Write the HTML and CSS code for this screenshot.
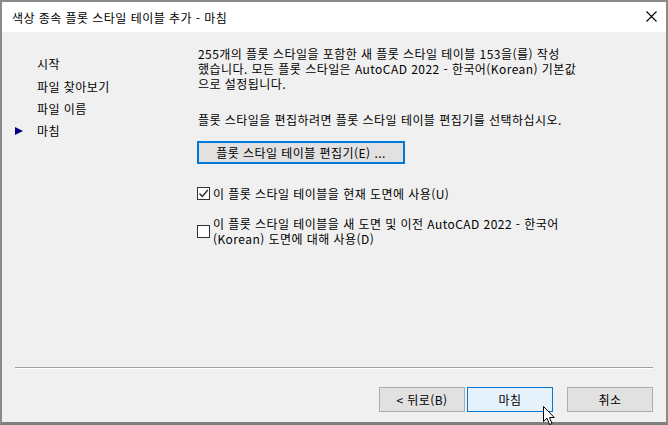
FILE: index.html
```html
<!DOCTYPE html>
<html lang="ko">
<head>
<meta charset="utf-8">
<title>색상 종속 플롯 스타일 테이블 추가 - 마침</title>
<link rel="stylesheet" href="styles.css">
</head>
<body>
<div class="window">
  <div class="titlebar">
    <span class="title">색상 종속 플롯 스타일 테이블 추가 - 마침</span>
    <span class="close">
      <svg width="11" height="11" viewBox="0 0 11 11"><path d="M0.5 0.5 L10.5 10.5 M10.5 0.5 L0.5 10.5" stroke="#000" stroke-width="1.1" fill="none"/></svg>
    </span>
  </div>
  <div class="body">
    <div class="content">
      <ul class="nav">
        <li class="nav-item"><span class="marker"></span>시작</li>
        <li class="nav-item"><span class="marker"></span>파일 찾아보기</li>
        <li class="nav-item"><span class="marker"></span>파일 이름</li>
        <li class="nav-item current"><span class="marker"><svg width="8" height="8" viewBox="0 0 8 8"><path d="M0 0 L8 4 L0 8 Z" fill="#000080"/></svg></span>마침</li>
      </ul>
      <div class="main">
        <p class="para">255개의 플롯 스타일을 포함한 새 플롯 스타일 테이블 153을(를) 작성<br>했습니다. 모든 플롯 스타일은 AutoCAD 2022 - 한국어(Korean) 기본값<br>으로 설정됩니다.</p>
        <p class="para para2">플롯 스타일을 편집하려면 플롯 스타일 테이블 편집기를 선택하십시오.</p>
        <button class="btn editor">플롯 스타일 테이블 편집기(E) ...</button>
        <label class="check check1">
          <span class="box"><svg width="11" height="11" viewBox="0 0 11 11"><path d="M1.5 5.5 L4.3 8.5 L9.8 2" stroke="#222" stroke-width="1.3" fill="none"/></svg></span>
          <span class="check-text">이 플롯 스타일 테이블을 현재 도면에 사용(U)</span>
        </label>
        <label class="check check2">
          <span class="box"></span>
          <span class="check-text">이 플롯 스타일 테이블을 새 도면 및 이전 AutoCAD 2022 - 한국어<br>(Korean) 도면에 대해 사용(D)</span>
        </label>
      </div>
    </div>
    <div class="footer">
      <div class="separator"></div>
      <div class="buttons">
        <button class="btn fbtn back">&lt; 뒤로(B)</button>
        <button class="btn fbtn default">마침</button>
        <button class="btn fbtn cancel">취소</button>
      </div>
    </div>
  </div>
  <svg class="cursor" width="13" height="20" viewBox="0 0 13 20"><path d="M0.5 0.5 L0.5 15.5 L4 12.2 L6.6 18.5 L9 17.5 L6.5 11.5 L11.3 11.5 Z" fill="#fff" stroke="#000" stroke-width="1"/></svg>
</div>
</body>
</html>
```
FILE: styles.css
```css
* { box-sizing: border-box; }
html, body {
  margin: 0;
  padding: 0;
  width: 668px;
  height: 425px;
  overflow: hidden;
  background: #8a8a8a;
}
body {
  font-family: "Noto Sans CJK KR", "Noto Sans", sans-serif;
  font-size: 12px;
  letter-spacing: 0.45px;
  color: #000;
}
.window {
  position: relative;
  width: 668px;
  height: 425px;
  border-top: 2px solid #8a8a8a;
  border-left: 2px solid #8a8a8a;
  border-right: 2px solid #8a8a8a;
  border-bottom: 3px solid #7e7e7e;
  display: flex;
  flex-direction: column;
  background: #f0f0f0;
}
.titlebar {
  height: 30px;
  background: #fff;
  display: flex;
  align-items: center;
  justify-content: space-between;
  padding: 0 9px 0 10px;
  flex: none;
}
.title {
  line-height: 16px;
  padding-top: 1px;
}
.close {
  display: flex;
  width: 11px;
  height: 11px;
  margin-bottom: 2px;
}
.body {
  flex: 1;
  display: flex;
  flex-direction: column;
  background: #f0f0f0;
}
.content {
  flex: 1;
  display: flex;
}
.nav {
  list-style: none;
  margin: 0;
  padding: 21px 0 0 13px;
  width: 196px;
  flex: none;
}
.nav-item {
  display: flex;
  align-items: center;
  height: 22.4px;
  line-height: 22px;
}
.marker {
  width: 22px;
  display: flex;
  align-items: center;
  flex: none;
}
.main {
  padding-top: 14px;
  display: flex;
  flex-direction: column;
  align-items: flex-start;
}
.para {
  margin: 0;
  line-height: 15px;
  white-space: nowrap;
}
.para2 {
  margin-top: 21px;
}
.btn {
  font-family: inherit;
  font-size: 12px;
  letter-spacing: 0.45px;
  color: #000;
  background: #e1e1e1;
  border: 1px solid #adadad;
  padding: 0;
  margin: 0;
  line-height: 16px;
}
.editor {
  margin-top: 14px;
  width: 208px;
  height: 23px;
  border: 2px solid #0078d7;
  margin-left: -1px;
}
.check {
  display: flex;
  align-items: center;
  margin-left: -1px;
}
.check1 {
  margin-top: 22px;
}
.check2 {
  margin-top: 15px;
}
.box {
  width: 13px;
  height: 13px;
  border: 1px solid #333;
  background: #fff;
  flex: none;
  display: flex;
  align-items: center;
  justify-content: center;
  margin-right: 3px;
}
.check-text {
  line-height: 15px;
  white-space: nowrap;
}
.footer {
  flex: none;
  padding: 0 13px 10px 13px;
}
.separator {
  height: 2px;
  border-top: 1px solid #a0a0a0;
  border-bottom: 1px solid #fff;
  margin-bottom: 18px;
}
.buttons {
  display: flex;
  justify-content: flex-end;
}
.fbtn {
  width: 86px;
  height: 25px;
}
.back {
  margin-right: 2px;
}
.default {
  border-color: #0078d7;
  background: #e5f1fb;
  margin-right: 14px;
  width: 86px;
}
.cursor {
  position: absolute;
  left: 541px;
  top: 404px;
}
```
